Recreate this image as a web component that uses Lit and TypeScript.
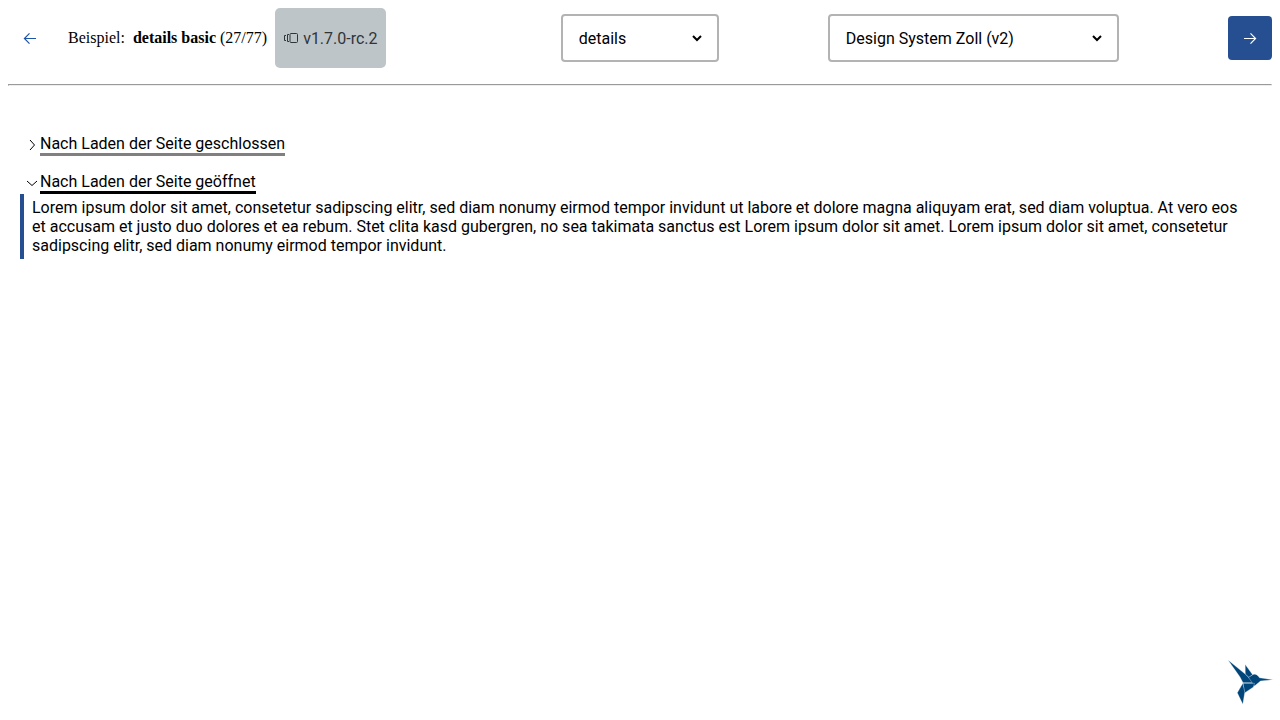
import { LitElement, html, css } from "lit";
import { customElement } from "lit/decorators.js";

@customElement("app-root")
export class AppRoot extends LitElement {
  static styles = css`
    :host {
      display: block;
      padding: 8px;
      color: #000;
      font-family: "Liberation Serif", serif;
      font-size: 16px;
    }
    svg { display: block; fill: none; stroke: currentColor; }
    .bar { display: flex; align-items: center; justify-content: space-between; }
    .intro { display: flex; align-items: center; gap: 8px; margin-right: 66px; }
    .nav {
      display: grid;
      place-items: center;
      width: 44px;
      height: 44px;
      padding: 0;
      border: 0;
      border-radius: 4px;
      background: none;
      color: #1f53a3;
    }
    .next { background: #254f90; color: #fff; }
    .label { margin-left: 8px; }
    .badge {
      display: flex;
      align-items: center;
      gap: 4px;
      height: 60px;
      padding: 0 8px;
      border-radius: 5px;
      background: #bec5c9;
      color: #2f3538;
      font-family: Roboto, sans-serif;
    }
    .picker { display: grid; align-items: center; }
    .picker > * { grid-area: 1 / 1; }
    .picker svg { justify-self: end; margin-right: 16px; pointer-events: none; }
    select {
      appearance: none;
      height: 48px;
      padding: 8px 16px;
      border: 2px solid #b3b3b3;
      border-radius: 4px;
      background: #fff;
      color: #000;
      font: 16px Roboto, sans-serif;
    }
    .component { width: 158px; }
    .theme { width: 291px; }
    hr { margin: 16px 0; }
    main {
      display: grid;
      gap: 16px;
      padding: 32px 12px;
      font: 16px/19px Roboto, sans-serif;
    }
    summary { display: flex; align-items: center; padding-left: 4px; list-style: none; }
    summary::-webkit-details-marker { display: none; }
    .title { border-bottom: 3px solid #808080; }
    details[open] .title { border-color: #000; }
    .down { display: none; }
    details[open] .down { display: block; }
    details[open] .right { display: none; }
    .content { display: none; padding: 4px 8px; border-left: 4px solid #254f90; }
    details[open] .content { display: block; }
    .bird { position: fixed; right: 6px; bottom: 14px; fill: #00467a; stroke: #fff; }
  `;

  render() {
    return html`
      <header class="bar">
        <div class="intro">
          <button class="nav" aria-label="Vorheriges Beispiel">
            <svg width="16" height="16" viewBox="0 0 16 16" stroke-width="1.2"><path d="M14 8.5H2.5M7.5 3.3 2.4 8.5l5.1 5.2" /></svg>
          </button>
          <span class="label">Beispiel:</span>
          <span><strong>details basic</strong> (27/77)</span>
          <span class="badge">
            <svg width="16" height="16" viewBox="0 0 16 16" stroke-width="1"><path d="M8 3.500h5.500a1 1 0 0 1 1 1v7a1 1 0 0 1-1 1H8a1 1 0 0 1-1-1v-7a1 1 0 0 1 1-1zM6 4.500H4.500v7H6M3 5.500H1.500v5H3" /></svg>
            <span>v1.7.0-rc.2</span>
          </span>
        </div>
        <div class="picker">
          <select class="component" aria-label="Komponente">
            <option>details</option>
          </select>
          ${this.arrow()}
        </div>
        <div class="picker">
          <select class="theme" aria-label="Theme">
            <option>Design System Zoll (v2)</option>
          </select>
          ${this.arrow()}
        </div>
        <button class="nav next" aria-label="Nächstes Beispiel">
          <svg width="16" height="16" viewBox="0 0 16 16" stroke-width="1.2"><path d="M2 8.5h11.5M8.500 3.3l5.100 5.200-5.100 5.200" /></svg>
        </button>
      </header>
      <hr />
      <main>
        <details>
          <summary>${this.chevrons()}<span class="title">Nach Laden der Seite geschlossen</span></summary>
          <div class="content">Lorem ipsum dolor sit amet.</div>
        </details>
        <details open>
          <summary>${this.chevrons()}<span class="title">Nach Laden der Seite geöffnet</span></summary>
          <div class="content">
            Lorem ipsum dolor sit amet, consetetur sadipscing elitr, sed diam nonumy eirmod tempor
            invidunt ut labore et dolore magna aliquyam erat, sed diam voluptua. At vero eos et
            accusam et justo duo dolores et ea rebum. Stet clita kasd gubergren, no sea takimata
            sanctus est Lorem ipsum dolor sit amet. Lorem ipsum dolor sit amet, consetetur
            sadipscing elitr, sed diam nonumy eirmod tempor invidunt.
          </div>
        </details>
      </main>
      <svg class="bird" width="46" height="46" viewBox="0 0 46 46" stroke-width="0.3" aria-hidden="true">
        <path d="M0 0 17.500 14.300 26.500 22.800 15 22.800 12 17z" />
        <path d="M17.200 4.500 24.500 14.500 21 17.500 17.300 14z" />
        <path d="M20.500 17.500l4.500-3Q28.500 13 31.500 17.800L45 19.700 32.500 21 26.500 26z" />
        <path d="M15 23.300h11.500l-1 3.700-9 6z" />
        <path d="M14.800 23.300l2 9-2 12-5.500-11.500z" />
      </svg>
    `;
  }

  private arrow() {
    return html`
      <svg width="12" height="12" viewBox="0 0 12 12" stroke-width="2" aria-hidden="true"><path d="M2 4l4 4 4-4" /></svg>
    `;
  }

  private chevrons() {
    return html`
      <svg class="right" width="16" height="16" viewBox="0 0 16 16"><path d="M6 3l4.500 5L6 13" /></svg>
      <svg class="down" width="16" height="16" viewBox="0 0 16 16"><path d="M3 6l5 4.500L13 6" /></svg>
    `;
  }
}
